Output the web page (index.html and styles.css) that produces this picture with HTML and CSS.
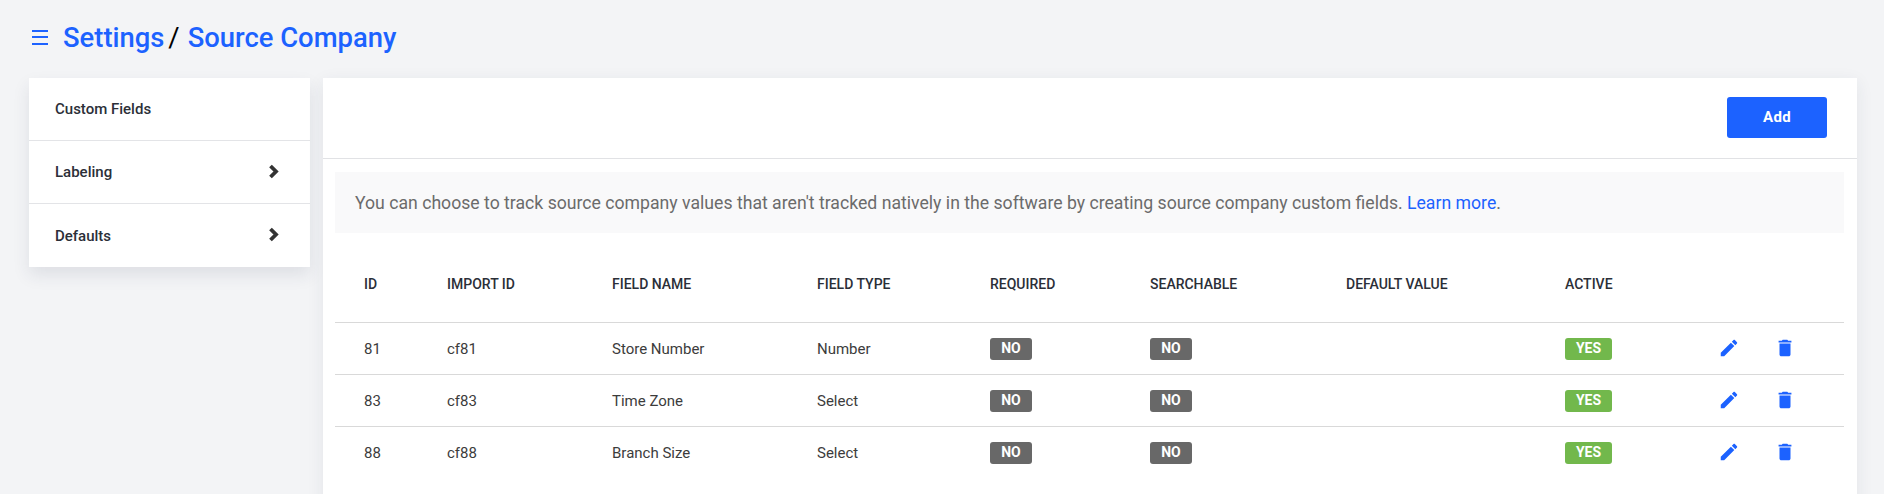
FILE: index.html
```html
<!DOCTYPE html>
<html lang="en">
<head>
    <meta charset="UTF-8">
    <meta name="viewport" content="width=device-width, initial-scale=1.0">
    <title>Settings / Source Company</title>
    <link rel="stylesheet" href="styles.css">
</head>
<body>
    <header class="page-title">
        <svg class="menu-icon" viewBox="0 0 16 15" width="16" height="15"><path d="M0 1h16M0 7h16M0 14h16" fill="none" stroke="currentColor" stroke-width="2"/></svg>
        <h1><a href="#">Settings</a><span class="slash">/</span><a href="#">Source Company</a></h1>
    </header>

    <div class="layout">
        <nav class="side-menu">
            <div class="side-item">Custom Fields</div>
            <div class="side-item">Labeling
                <svg class="chevron" viewBox="0 0 11 15" width="11" height="15"><path d="M2.5 2l5.5 5.5-5.5 5.5" fill="none" stroke="currentColor" stroke-width="3.8"/></svg>
            </div>
            <div class="side-item">Defaults
                <svg class="chevron" viewBox="0 0 11 15" width="11" height="15"><path d="M2.5 2l5.5 5.5-5.5 5.5" fill="none" stroke="currentColor" stroke-width="3.8"/></svg>
            </div>
        </nav>

        <main class="card">
            <div class="card-top">
                <button class="add-btn">Add</button>
            </div>
            <div class="card-body">
                <p class="notice">You can choose to track source company values that aren't tracked natively in the software by creating source company custom fields. <a href="#">Learn more</a>.</p>
                <table class="fields">
                    <colgroup>
                        <col class="c-id"><col class="c-import"><col class="c-name"><col class="c-type"><col class="c-req"><col class="c-search"><col class="c-default"><col class="c-active"><col class="c-edit"><col>
                    </colgroup>
                    <thead>
                        <tr>
                            <th>ID</th><th>IMPORT ID</th><th>FIELD NAME</th><th>FIELD TYPE</th><th>REQUIRED</th><th>SEARCHABLE</th><th>DEFAULT VALUE</th><th>ACTIVE</th><th></th><th></th>
                        </tr>
                    </thead>
                    <tbody>
                        <tr>
                            <td>81</td><td>cf81</td><td>Store Number</td><td>Number</td>
                            <td><span class="badge no">NO</span></td><td><span class="badge no">NO</span></td><td></td>
                            <td><span class="badge yes">YES</span></td>
                            <td class="act"><svg viewBox="0 0 24 24" width="22" height="22"><path d="M3 17.25V21h3.75L17.81 9.94l-3.75-3.75L3 17.25zM20.71 7.04c.39-.39.39-1.02 0-1.41l-2.34-2.34c-.39-.39-1.02-.39-1.41 0l-1.83 1.83 3.75 3.75 1.83-1.83z"/></svg></td>
                            <td class="act"><svg viewBox="0 0 24 24" width="22" height="22"><path d="M6 19c0 1.1.9 2 2 2h8c1.1 0 2-.9 2-2V7H6v12zM19 4h-3.5l-1-1h-5l-1 1H5v2h14V4z"/></svg></td>
                        </tr>
                        <tr>
                            <td>83</td><td>cf83</td><td>Time Zone</td><td>Select</td>
                            <td><span class="badge no">NO</span></td><td><span class="badge no">NO</span></td><td></td>
                            <td><span class="badge yes">YES</span></td>
                            <td class="act"><svg viewBox="0 0 24 24" width="22" height="22"><path d="M3 17.25V21h3.75L17.81 9.94l-3.75-3.75L3 17.25zM20.71 7.04c.39-.39.39-1.02 0-1.41l-2.34-2.34c-.39-.39-1.02-.39-1.41 0l-1.83 1.83 3.75 3.75 1.83-1.83z"/></svg></td>
                            <td class="act"><svg viewBox="0 0 24 24" width="22" height="22"><path d="M6 19c0 1.1.9 2 2 2h8c1.1 0 2-.9 2-2V7H6v12zM19 4h-3.5l-1-1h-5l-1 1H5v2h14V4z"/></svg></td>
                        </tr>
                        <tr>
                            <td>88</td><td>cf88</td><td>Branch Size</td><td>Select</td>
                            <td><span class="badge no">NO</span></td><td><span class="badge no">NO</span></td><td></td>
                            <td><span class="badge yes">YES</span></td>
                            <td class="act"><svg viewBox="0 0 24 24" width="22" height="22"><path d="M3 17.25V21h3.75L17.81 9.94l-3.75-3.75L3 17.25zM20.71 7.04c.39-.39.39-1.02 0-1.41l-2.34-2.34c-.39-.39-1.02-.39-1.41 0l-1.83 1.83 3.75 3.75 1.83-1.83z"/></svg></td>
                            <td class="act"><svg viewBox="0 0 24 24" width="22" height="22"><path d="M6 19c0 1.1.9 2 2 2h8c1.1 0 2-.9 2-2V7H6v12zM19 4h-3.5l-1-1h-5l-1 1H5v2h14V4z"/></svg></td>
                        </tr>
                    </tbody>
                </table>
            </div>
        </main>
    </div>
</body>
</html>
```

FILE: styles.css
```css
html, body {
    height: 100%;
}
body {
    margin: 0;
    overflow: hidden;
    display: flex;
    flex-direction: column;
    font-family: Roboto, sans-serif;
    background-color: #f3f4f6;
    color: #2b2f38;
}
a {
    color: #1c62ff;
    text-decoration: none;
}

.page-title {
    height: 76px;
    margin-bottom: 2px;
    flex: none;
    display: flex;
    align-items: center;
    padding-left: 32px;
    color: #1c62ff;
}
.menu-icon {
    margin: 0 15px 1px 0;
}
.page-title h1 {
    margin: 0;
    font-size: 27.4px;
    font-weight: 500;
    line-height: 32px;
}
.slash {
    color: #000;
    font-weight: 400;
    margin: 0 8px 0 4px;
}

.layout {
    flex: 1;
    display: flex;
    align-items: flex-start;
    gap: 13px;
    padding: 0 27px 0 29px;
}

.side-menu {
    width: 281px;
    flex: none;
    background-color: #fff;
    box-shadow: 0 8px 16px rgba(40, 50, 80, 0.1);
}
.side-item {
    height: 63px;
    display: flex;
    align-items: center;
    justify-content: space-between;
    padding: 0 31px 0 26px;
    box-sizing: border-box;
    border-bottom: 1px solid #e3e4e7;
    font-size: 15px;
    font-weight: 500;
}
.side-item:last-child {
    border-bottom: 0;
}
.chevron {
    color: #333;
    margin-bottom: 2px;
}

.card {
    flex: 1;
    height: 440px;
    background-color: #fff;
    box-shadow: 0 4px 16px rgba(40, 50, 80, 0.08);
}
.card-top {
    height: 81px;
    box-sizing: border-box;
    display: flex;
    justify-content: flex-end;
    align-items: flex-start;
    padding: 19px 30px 0 0;
    border-bottom: 1px solid #e1e2e5;
}
.add-btn {
    width: 100px;
    height: 41px;
    padding: 0 0 2px;
    border: 0;
    border-radius: 3px;
    background-color: #1c62ff;
    color: #fff;
    font-family: Roboto, sans-serif;
    font-size: 15px;
    font-weight: 700;
    letter-spacing: 0.4px;
}
.card-body {
    padding: 13px 13px 0 12px;
}
.notice {
    margin: 0;
    height: 61px;
    padding: 0 20px;
    box-sizing: border-box;
    display: flex;
    align-items: center;
    white-space: pre-wrap;
    background-color: #f9f9fa;
    color: #6b6b6b;
    font-size: 17.65px;
}

.fields {
    width: 100%;
    table-layout: fixed;
    border-collapse: collapse;
    font-size: 15px;
}
.c-id { width: 83px; }
.c-import { width: 165px; }
.c-name { width: 205px; }
.c-type { width: 173px; }
.c-req { width: 160px; }
.c-search { width: 196px; }
.c-default { width: 219px; }
.c-active { width: 182px; }
.c-edit { width: 56px; }

.fields th {
    height: 89px;
    padding: 13px 0 0 29px;
    box-sizing: border-box;
    text-align: left;
    font-size: 14px;
    font-weight: 500;
    color: #2b2f38;
    border-bottom: 1px solid #d9d9d9;
}
.fields td {
    height: 52px;
    box-sizing: border-box;
    padding: 1px 0 0 29px;
    color: #3c3c3c;
    border-bottom: 1px solid #d9d9d9;
}
.fields tbody tr:last-child td {
    border-bottom: 0;
}
.fields td.act {
    padding: 0;
}
.act svg {
    display: block;
    fill: #1c62ff;
}

.badge {
    display: block;
    height: 22px;
    line-height: 21px;
    border-radius: 3px;
    text-align: center;
    color: #fff;
    font-size: 14px;
    font-weight: 700;
}
.badge.no {
    width: 42px;
    background-color: #686868;
}
.badge.yes {
    width: 47px;
    background-color: #72b84c;
}
```
